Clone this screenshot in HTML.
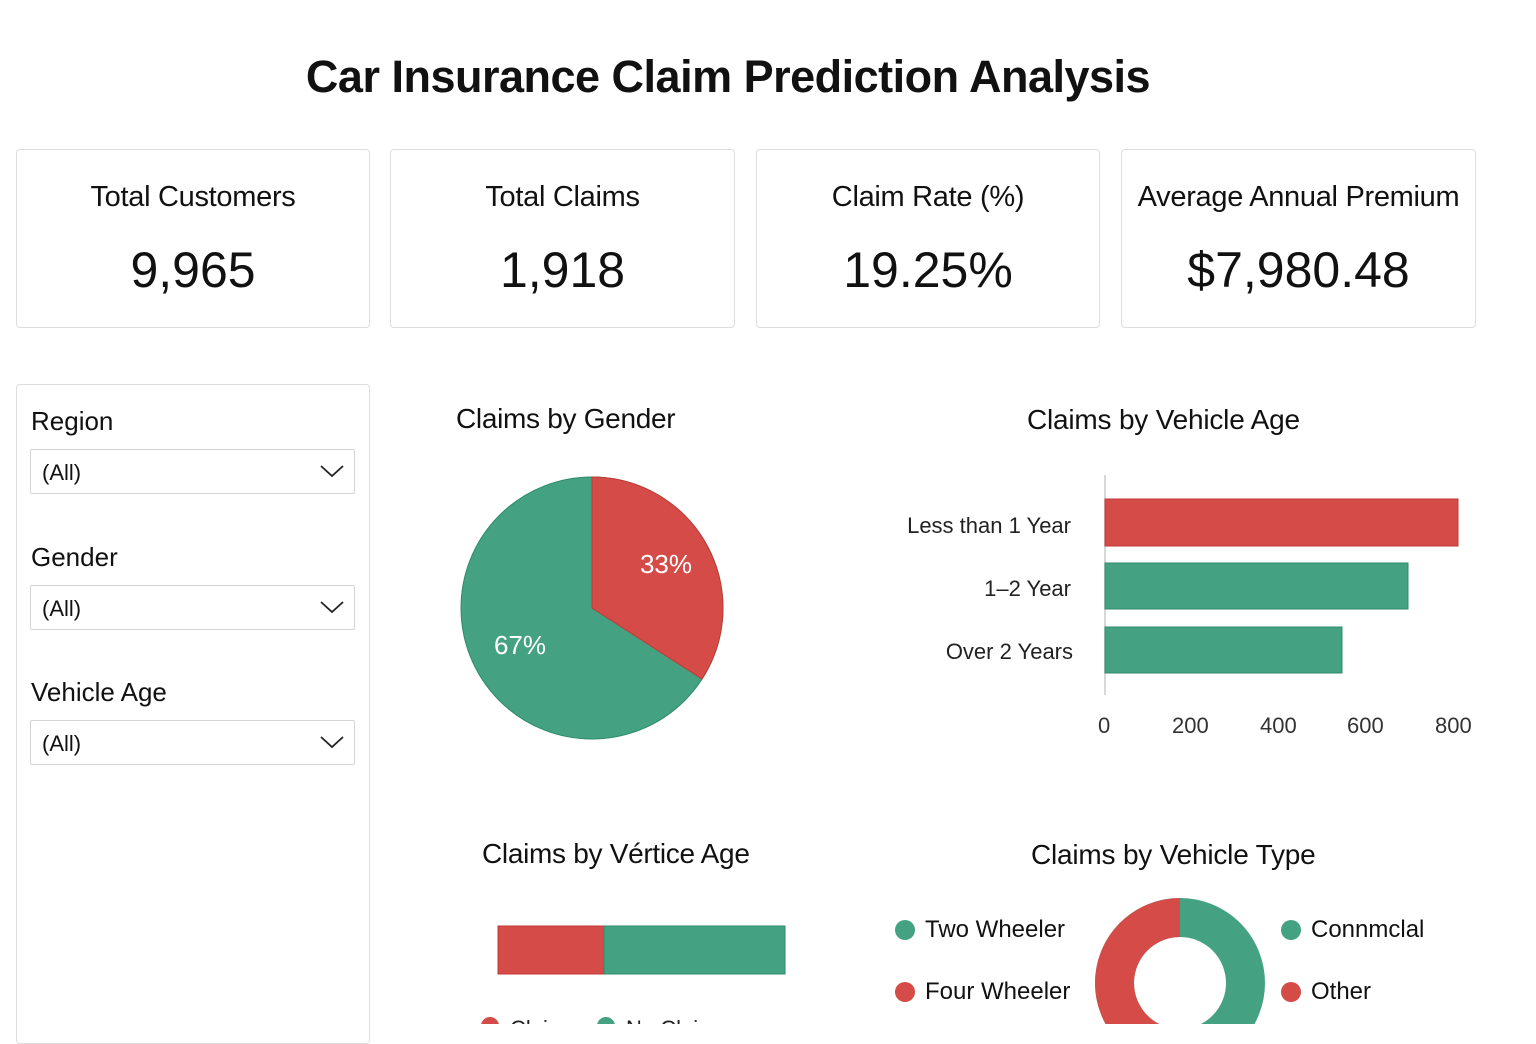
<!DOCTYPE html>
<html><head><meta charset="utf-8"><style>
*{margin:0;padding:0;box-sizing:border-box}
body{width:1536px;height:1024px;overflow:hidden;background:#fff;font-family:"Liberation Sans","DejaVu Sans",sans-serif;color:#111;position:relative}
.a{position:absolute}
.card{position:absolute;border:1px solid #ddd;border-radius:4px;background:#fff;top:149px;height:179px;text-align:center}
.card .t{font-size:29px;margin-top:31px;white-space:nowrap;letter-spacing:-0.3px}
.card .v{font-size:50px;margin-top:27px}
.lbl{position:absolute;left:31px;font-size:26px}
.sel{position:absolute;left:30px;width:325px;height:45px;border:1px solid #d4d4d4;border-radius:2px;font-size:22px;padding:10px 0 0 11px}
.sel svg{position:absolute;right:10px;top:14px}
.h{position:absolute;font-size:28px;white-space:nowrap}
.tick{position:absolute;top:713px;font-size:22px;color:#333}
.yl{position:absolute;font-size:22px;color:#222;text-align:right;width:200px}
.dot{position:absolute;width:20px;height:20px;border-radius:50%}
.g{background:#44a283}.r{background:#d44b47}
.lt{position:absolute;font-size:24px}
</style></head><body>
<div class="a" style="left:0;width:1456px;top:51px;text-align:center;font-size:45px;font-weight:bold;letter-spacing:-0.5px">Car Insurance Claim Prediction Analysis</div>

<div class="card" style="left:16px;width:354px"><div class="t">Total Customers</div><div class="v">9,965</div></div>
<div class="card" style="left:390px;width:345px"><div class="t">Total Claims</div><div class="v">1,918</div></div>
<div class="card" style="left:756px;width:344px"><div class="t">Claim Rate (%)</div><div class="v">19.25%</div></div>
<div class="card" style="left:1121px;width:355px"><div class="t">Average Annual Premium</div><div class="v">$7,980.48</div></div>

<div class="a" style="left:16px;top:384px;width:354px;height:660px;border:1px solid #ddd;border-radius:4px"></div>
<div class="lbl" style="top:406px">Region</div>
<div class="sel" style="top:449px">(All)<svg width="24" height="14"><path d="M1 2 L12 12 L23 2" fill="none" stroke="#222" stroke-width="1.8"/></svg></div>
<div class="lbl" style="top:542px">Gender</div>
<div class="sel" style="top:585px">(All)<svg width="24" height="14"><path d="M1 2 L12 12 L23 2" fill="none" stroke="#222" stroke-width="1.8"/></svg></div>
<div class="lbl" style="top:677px">Vehicle Age</div>
<div class="sel" style="top:720px">(All)<svg width="24" height="14"><path d="M1 2 L12 12 L23 2" fill="none" stroke="#222" stroke-width="1.8"/></svg></div>

<div class="h" style="left:456px;top:403px;letter-spacing:-0.3px">Claims by Gender</div>
<svg class="a" style="left:0;top:0" width="1536" height="1024">
<circle cx="592" cy="608" r="131" fill="#44a283" stroke="#2f8a6c" stroke-width="1"/>
<path d="M592 608 L592 477 A131 131 0 0 1 702 679 Z" fill="#d44b47" stroke="#c23a36" stroke-width="1"/>
<text x="666" y="573" font-size="26" fill="#fff" text-anchor="middle" font-family="Liberation Sans">33%</text>
<text x="520" y="654" font-size="26" fill="#fff" text-anchor="middle" font-family="Liberation Sans">67%</text>
<line x1="1105" y1="475" x2="1105" y2="695" stroke="#ccc" stroke-width="1.5"/>
<rect x="1105" y="499" width="353" height="47" fill="#d44b47" stroke="#c23a36"/>
<rect x="1105" y="563" width="303" height="46" fill="#44a283" stroke="#2f8a6c"/>
<rect x="1105" y="627" width="237" height="46" fill="#44a283" stroke="#2f8a6c"/>
<rect x="498" y="926" width="106" height="48" fill="#d44b47" stroke="#c23a36"/>
<rect x="604" y="926" width="181" height="48" fill="#44a283" stroke="#2f8a6c"/>
<circle cx="1180" cy="983" r="65.5" fill="none" stroke="#44a283" stroke-width="39"/>
<path d="M1180 898 A85 85 0 0 0 1180 1068 L1180 1029 A46 46 0 0 1 1180 937 Z" fill="#d44b47"/>
<circle cx="490" cy="1026" r="9" fill="#d44b47"/>
<circle cx="606" cy="1026" r="9" fill="#44a283"/>
<text x="510" y="1036" font-size="22" font-family="Liberation Sans" fill="#222">Claims</text>
<text x="626" y="1036" font-size="22" font-family="Liberation Sans" fill="#222">No Claims</text>
</svg>

<div class="h" style="left:1027px;top:404px;letter-spacing:-0.2px">Claims by Vehicle Age</div>
<div class="yl" style="left:871px;top:513px">Less than 1 Year</div>
<div class="yl" style="left:871px;top:576px">1–2 Year</div>
<div class="yl" style="left:873px;top:639px">Over 2 Years</div>
<div class="tick" style="left:1098px">0</div>
<div class="tick" style="left:1172px">200</div>
<div class="tick" style="left:1260px">400</div>
<div class="tick" style="left:1347px">600</div>
<div class="tick" style="left:1435px">800</div>

<div class="h" style="left:482px;top:838px;letter-spacing:-0.3px">Claims by Vértice Age</div>
<div class="h" style="left:1031px;top:839px;letter-spacing:-0.2px">Claims by Vehicle Type</div>
<div class="dot g" style="left:895px;top:920px"></div><div class="lt" style="left:925px;top:916px">Two Wheeler</div>
<div class="dot r" style="left:895px;top:982px"></div><div class="lt" style="left:925px;top:978px">Four Wheeler</div>
<div class="dot g" style="left:1281px;top:920px"></div><div class="lt" style="left:1311px;top:916px">Connmclal</div>
<div class="dot r" style="left:1281px;top:982px"></div><div class="lt" style="left:1311px;top:978px">Other</div>
</body></html>
